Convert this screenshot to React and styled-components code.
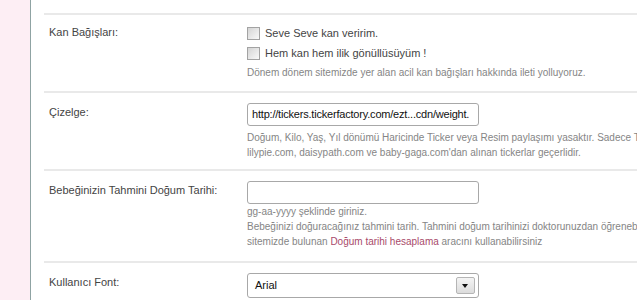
import React from "react";
import styled, { createGlobalStyle } from "styled-components";

const GlobalStyle = createGlobalStyle`
  body {
    margin: 0;
    background: #fff;
    font-family: "Liberation Sans", Arial, sans-serif;
    overflow: hidden;
  }
`;

function App() {
  return (
    <Page>
      <GlobalStyle />
      <Side />
      <Main>
        <Row $top={8}>
          <Label>Kan Bağışları:</Label>
          <Field>
            <CheckLine>
              <Box />
              Seve Seve kan veririm.
            </CheckLine>
            <CheckLine>
              <Box />
              Hem kan hem ilik gönüllüsüyüm !
            </CheckLine>
            <Hint $top={2}>
              Dönem dönem sitemizde yer alan acil kan bağışları hakkında ileti yolluyoruz.
            </Hint>
          </Field>
        </Row>

        <Row $bottom={9}>
          <Label>Çizelge:</Label>
          <Field>
            <TextBox>http://tickers.tickerfactory.com/ezt...cdn/weight.</TextBox>
            <Hint $top={4}>
              Doğum, Kilo, Yaş, Yıl dönümü Haricinde Ticker veya Resim paylaşımı yasaktır. Sadece Ticker olarak
              <br />
              lilypie.com, daisypath.com ve baby-gaga.com'dan alınan tickerlar geçerlidir.
            </Hint>
          </Field>
        </Row>

        <Row $bottom={12}>
          <Label>Bebeğinizin Tahmini Doğum Tarihi:</Label>
          <Field>
            <TextBox />
            <Hint $top={0}>
              gg-aa-yyyy şeklinde giriniz.
              <br />
              Bebeğinizi doğuracağınız tahmini tarih. Tahmini doğum tarihinizi doktorunuzdan öğrenebilirsiniz veya
              <br />
              sitemizde bulunan <Link>Doğum tarihi hesaplama</Link> aracını kullanabilirsiniz
            </Hint>
          </Field>
        </Row>

        <Row>
          <Label>Kullanıcı Font:</Label>
          <Field>
            <SelectBox>
              Arial
              <Arrow />
            </SelectBox>
          </Field>
        </Row>
      </Main>
    </Page>
  );
}

const Page = styled.div`
  display: flex;
  min-height: 300px;
`;

const Side = styled.div`
  width: 30px;
  flex-shrink: 0;
  background: #fdeef4;
  border-right: 1px solid #8fa3a3;
`;

const Main = styled.div`
  flex: 1;
  padding: 13px 0 0 13px;
  overflow: hidden;
`;

const Row = styled.div`
  display: grid;
  grid-template-columns: 198px 1fr;
  border-top: 2px solid #e9e9e9;
  padding: ${(p) => p.$top ?? 10}px 0 ${(p) => p.$bottom ?? 11}px 5px;
`;

const Label = styled.div`
  font-size: 11px;
  color: #444;
  padding-top: 3px;
`;

const Field = styled.div`
  min-width: 0;
  white-space: nowrap;
`;

const CheckLine = styled.div`
  display: flex;
  align-items: center;
  gap: 5px;
  height: 20px;
  font-size: 11px;
  color: #444;
`;

const Box = styled.span`
  width: 11px;
  height: 11px;
  border: 1px solid #a3a3a3;
  background: linear-gradient(135deg, #d4d4d4, #f9f9f9);
`;

const Hint = styled.div`
  margin-top: ${(p) => p.$top}px;
  font-size: 10px;
  line-height: 15px;
  color: #858585;
`;

const Link = styled.span`
  color: #a84a6a;
`;

const TextBox = styled.div`
  box-sizing: border-box;
  width: 232px;
  height: 23px;
  border: 1px solid #a8a8a8;
  border-radius: 3px;
  padding: 0 4px;
  font-size: 11px;
  letter-spacing: -0.2px;
  line-height: 21px;
  color: #111;
  overflow: hidden;
`;

const SelectBox = styled(TextBox)`
  display: flex;
  align-items: center;
  justify-content: space-between;
  height: 25px;
  letter-spacing: 0;
  padding: 0 3px 0 7px;
`;

const Arrow = styled.span`
  position: relative;
  width: 17px;
  height: 15px;
  border: 1px solid #b5b5b5;
  border-radius: 2px;
  background: linear-gradient(#f4f4f4, #dcdcdc);

  &::after {
    content: "";
    position: absolute;
    left: 5px;
    top: 6px;
    border-left: 3.5px solid transparent;
    border-right: 3.5px solid transparent;
    border-top: 4px solid #111;
  }
`;

export default App;
